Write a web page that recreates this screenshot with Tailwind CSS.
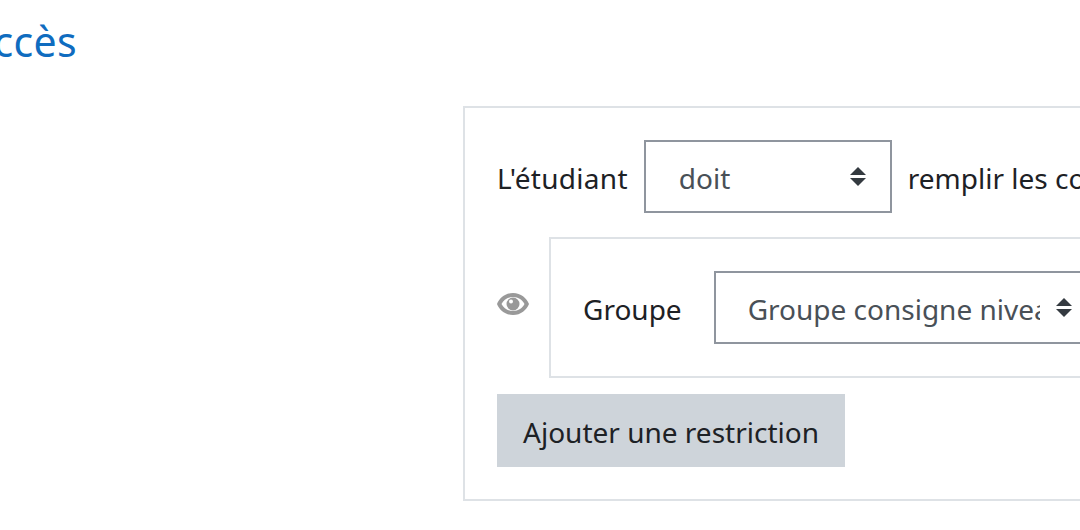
<!DOCTYPE html>
<html lang="fr">
<head>
    <meta charset="UTF-8">
    <title>Accès</title>
    <script src="https://cdn.jsdelivr.net/npm/@tailwindcss/browser@4"></script>
</head>
<body class="bg-white overflow-hidden w-[1080px] h-[530px] text-[#1d2125] font-['Noto_Sans',sans-serif] text-[28px] leading-[45px]">

    <!-- titre de section, coupe a gauche -->
    <div class="h-[106px] overflow-hidden">
        <h3 class="ml-[-33px] pt-[11px] text-[41px] tracking-[0.3px] leading-[60px] text-[#0f6cbf] whitespace-nowrap">Accès</h3>
    </div>

    <div class="ml-[463px] w-[800px] h-[395px] border-2 border-[#dee2e6] pt-[32px] px-[32px]">
        <!-- ligne 1 -->
        <div class="flex items-center h-[73px]">
            <span class="mr-[16px] pt-[4px] tracking-[0.3px] shrink-0">L'étudiant</span>
            <div class="relative shrink-0 w-[248px] h-[73px] border-2 border-[#8f959e] pl-[33px] pt-[4px] flex items-center text-[#495057]">
                doit
                <svg class="absolute right-[24px] top-[25px]" width="16" height="20" viewBox="0 0 16 20"><path d="M8 0 L16 8 L0 8 Z M0 11 L16 11 L8 19 Z" fill="#343a40"/></svg>
            </div>
            <span class="ml-[16px] pt-[4px] whitespace-nowrap">remplir les conditions suivantes</span>
        </div>

        <!-- ligne 2 -->
        <div class="flex mt-[24px]">
            <div class="w-[52px] shrink-0 pt-[56px]">
                <svg width="32" height="22" viewBox="0 0 32 22"><path fill-rule="evenodd" d="M16 0 C24 0 29.500 5 32 11 C29.500 17 24 22 16 22 C8 22 2.500 17 0 11 C2.500 5 8 0 16 0 Z M16 4 C10.400 4 6.600 7 4.500 11 C6.600 15 10.400 18 16 18 C21.600 18 25.400 15 27.500 11 C25.400 7 21.600 4 16 4 Z" fill="#999"/><circle cx="16" cy="11" r="6.500" fill="#999"/><circle cx="14" cy="8.500" r="2" fill="#fff"/></svg>
            </div>
            <div class="w-[700px] shrink-0 h-[141px] border-2 border-[#dee2e6] pt-[32px] pl-[32px] flex items-start">
                <span class="h-[73px] pt-[4px] flex items-center mr-[32px]">Groupe</span>
                <div class="relative w-[380px] h-[73px] border-2 border-[#8f959e] pl-[32px] pt-[4px] flex items-center text-[#495057]">
                    <span class="block w-[292px] overflow-hidden whitespace-nowrap">Groupe consigne niveau 1</span>
                    <svg class="absolute left-[340px] top-[25px]" width="16" height="20" viewBox="0 0 16 20"><path d="M8 0 L16 8 L0 8 Z M0 11 L16 11 L8 19 Z" fill="#343a40"/></svg>
                </div>
            </div>
        </div>

        <!-- bouton -->
        <button class="block mt-[16px] w-[348px] h-[73px] pt-[4px] bg-[#ced4da] text-center whitespace-nowrap">Ajouter une restriction</button>
    </div>
</body>
</html>
